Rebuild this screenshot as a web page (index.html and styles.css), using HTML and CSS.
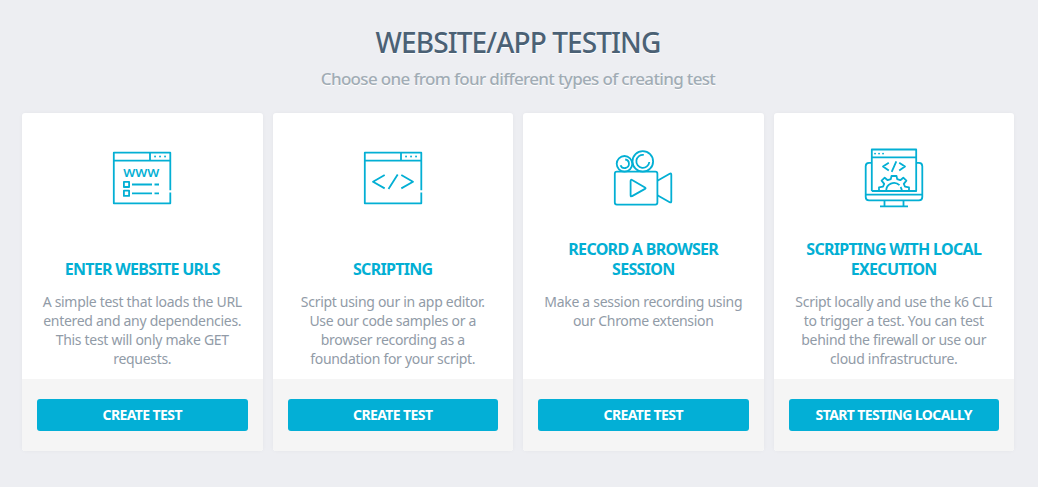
FILE: index.html
```html
<!DOCTYPE html>
<html lang="en">
<head>
<meta charset="utf-8">
<title>Website/App Testing</title>
<link rel="stylesheet" href="styles.css">
</head>
<body>
<main class="page">
  <header class="intro">
    <h1 class="title">WEBSITE/APP TESTING</h1>
    <p class="subtitle">Choose one from four different types of creating test</p>
  </header>
  <section class="cards">
    <article class="card">
      <div class="card-body">
        <svg class="icon" viewBox="0 0 80 75" aria-hidden="true">
          <path d="M68.3 50.3V12.7H11.8V63.3H68.3V52.5M11.8 20.7H68.3M48 12.7V20.7"/>
          <path class="dots" d="M53 16.5h.1M58 16.5h.1M63 16.5h.1"/>
          <text class="www" x="21.3" y="36.5" textLength="36" lengthAdjust="spacingAndGlyphs">WWW</text>
          <path d="M21.9 41.8h5.2V47h-5.2zM21.9 50.7h5.2v5.2h-5.2zM30 44.5H50M52.5 44.5H57M30 53.3H50M52.5 53.3H57"/>
        </svg>
        <div class="heading"><h2 class="name">ENTER WEBSITE URLS</h2></div>
        <p class="text">A simple test that loads the URL<br>entered and any dependencies.<br>This test will only make GET<br>requests.</p>
      </div>
      <footer class="card-footer"><button class="button">CREATE TEST</button></footer>
    </article>
    <article class="card">
      <div class="card-body">
        <svg class="icon" viewBox="0 0 80 75" aria-hidden="true">
          <path d="M68.3 50.3V12.7H11.8V63.3H68.3V52.5M11.8 20.7H68.3M48 12.7V20.7"/>
          <path class="dots" d="M53 16.5h.1M58 16.5h.1M63 16.5h.1"/>
          <path d="M31.7 35L20 41.7L31.7 48.4M44.7 34.5L35.5 49M48.3 35L60 41.7L48.3 48.4"/>
        </svg>
        <div class="heading"><h2 class="name">SCRIPTING</h2></div>
        <p class="text">Script using our in app editor.<br>Use our code samples or a<br>browser recording as a<br>foundation for your script.</p>
      </div>
      <footer class="card-footer"><button class="button">CREATE TEST</button></footer>
    </article>
    <article class="card">
      <div class="card-body">
        <svg class="icon" viewBox="0 0 80 75" aria-hidden="true">
          <rect x="11.8" y="31.7" width="42.6" height="32.9" rx="2"/>
          <path d="M54.4 40.7L66.7 33.7Q68.3 33 68.3 34.7V61.3Q68.3 63 66.7 62.2L54.4 55.2M27.6 41.2V55.3Q27.6 57 29.1 56.1L42 48.9Q43.2 48.2 42 47.5L29.1 40Q27.6 39.2 27.6 41.2z"/>
          <circle cx="21.5" cy="23.8" r="7.8"/>
          <circle cx="39.8" cy="21.4" r="10.3"/>
          <path d="M22.2 19.5A4.3 4.3 0 1 1 17.6 25.2M40.8 14.9A6.5 6.5 0 1 0 46.3 22"/>
        </svg>
        <div class="heading"><h2 class="name">RECORD A BROWSER<br>SESSION</h2></div>
        <p class="text">Make a session recording using<br>our Chrome extension</p>
      </div>
      <footer class="card-footer"><button class="button">CREATE TEST</button></footer>
    </article>
    <article class="card">
      <div class="card-body">
        <svg class="icon" viewBox="0 0 80 75" aria-hidden="true">
          <path d="M17.8 22.9H15Q11.7 22.9 11.7 26.3V57Q11.7 60.3 15 60.3H65Q68.3 60.3 68.3 57V26.3Q68.3 22.9 65 22.9H62.2M11.7 54.7H68.3M17.8 51V9.5H62.2V51H17.8M17.8 17.3H62.2"/>
          <path d="M30.5 60.3V66M49.5 60.3V66M26 66.3H54"/>
          <path class="dots" d="M21 13.6h.1M25 13.6h.1M29 13.6h.1"/>
          <path d="M34.8 22.8L29 26.6L34.8 30.5M42.3 21.3L37.7 31.8M45.2 22.8L51 26.6L45.2 30.5"/>
          <path d="M25 51V47.3L29 46.6L30.2 43.9L27.6 40.6L30.7 37.7L33.7 40.2L36.8 39.1L37.5 36H42.5L43.2 39.1L46.3 40.2L49.3 37.7L52.4 40.6L49.8 43.9L51 46.6L55 47.3V51M32.2 51A7.8 7.8 0 0 1 45.5 45.2M46.6 46.9A7.8 7.8 0 0 1 47.8 51"/>
        </svg>
        <div class="heading"><h2 class="name">SCRIPTING WITH LOCAL<br>EXECUTION</h2></div>
        <p class="text">Script locally and use the k6 CLI<br>to trigger a test. You can test<br>behind the firewall or use our<br>cloud infrastructure.</p>
      </div>
      <footer class="card-footer"><button class="button">START TESTING LOCALLY</button></footer>
    </article>
  </section>
</main>
</body>
</html>
```
FILE: styles.css
```css
* { box-sizing: border-box; }
body {
  margin: 0;
  background: #edeef2;
  font-family: "Noto Sans", "Open Sans", sans-serif;
  text-align: center;
}
.page { height: 487px; padding: 23px 24px 0 22px; }
.intro { height: 90px; }
.title {
  margin: 0;
  font-size: 28px;
  line-height: 38px;
  font-weight: 500;
  letter-spacing: -0.9px;
  color: #4b6175;
  text-shadow: 0 1px 0 #fff;
}
.subtitle {
  margin: 7px 0 0;
  font-size: 17px;
  line-height: 22px;
  font-weight: 500;
  letter-spacing: -0.66px;
  color: #a1acb5;
  text-shadow: 0 1px 0 #fff;
}
.cards { display: grid; grid-template-columns: repeat(4, 1fr); gap: 10px; }
.card {
  height: 338px;
  display: flex;
  flex-direction: column;
  border-radius: 3px;
  overflow: hidden;
  background: #fff;
  box-shadow: 0 0 4px rgba(0, 0, 0, 0.04);
}
.card-body { height: 266px; padding-top: 27px; }
.icon {
  display: block;
  width: 80px;
  height: 75px;
  margin: 0 auto;
  fill: none;
  stroke: #03afd4;
  stroke-width: 1.8;
  stroke-linejoin: round;
}
.dots { stroke-linecap: round; stroke-width: 1.8; }
.www { fill: #03afd4; stroke: none; font-size: 11.5px; font-weight: 600; }
.heading { height: 64px; display: flex; align-items: flex-end; justify-content: center; }
.name {
  margin: 0;
  font-size: 16px;
  line-height: 20px;
  font-weight: 700;
  letter-spacing: -0.7px;
  color: #03afd4;
}
.text {
  margin: 13px 0 0;
  font-size: 14px;
  line-height: 19px;
  letter-spacing: -0.3px;
  color: #919ba7;
}
.card-footer { height: 72px; padding: 20px 15px; background: #f5f5f5; }
.button {
  display: block;
  width: 100%;
  height: 32px;
  padding: 0;
  border: 0;
  border-radius: 3px;
  background: #03afd6;
  color: #fff;
  font: 700 14px/32px "Noto Sans", "Open Sans", sans-serif;
  letter-spacing: -0.6px;
}
```
